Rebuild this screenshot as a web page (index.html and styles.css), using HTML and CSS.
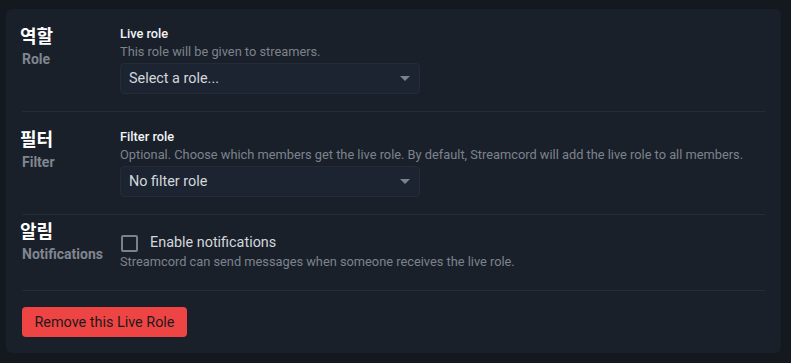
FILE: index.html
```html
<!DOCTYPE html>
<html>
<head>
  <meta charset="utf-8">
  <title>Live Role</title>
  <link rel="stylesheet" href="styles.css">
</head>
<body>
  <div class="card">
    <!-- 역할 -->
    <div class="row">
      <div class="row-label">
        <div class="label-ko">역할</div>
        <div class="label-en">Role</div>
      </div>
      <div class="row-body">
        <div class="field-title">Live role</div>
        <div class="field-desc">This role will be given to streamers.</div>
        <div class="select">
          <span>Select a role...</span>
          <span class="caret"></span>
        </div>
      </div>
    </div>

    <!-- 필터 -->
    <div class="row">
      <div class="row-label">
        <div class="label-ko">필터</div>
        <div class="label-en">Filter</div>
      </div>
      <div class="row-body">
        <div class="field-title">Filter role</div>
        <div class="field-desc">Optional. Choose which members get the live role. By default, Streamcord will add the live role to all members.</div>
        <div class="select">
          <span>No filter role</span>
          <span class="caret"></span>
        </div>
      </div>
    </div>

    <!-- 알림 -->
    <div class="row row-check">
      <div class="row-label">
        <div class="label-ko">알림</div>
        <div class="label-en">Notifications</div>
      </div>
      <div class="row-body">
        <label class="check">
          <span class="box"></span>
          <span>Enable notifications</span>
        </label>
        <div class="field-desc">Streamcord can send messages when someone receives the live role.</div>
      </div>
    </div>

    <div class="actions">
      <button class="btn-danger">Remove this Live Role</button>
    </div>
  </div>
</body>
</html>
```

FILE: styles.css
```css
body {
  margin: 9px 10px 10px 6px;
  background-color: #141920;
  font-family: Roboto, "Noto Sans CJK KR", sans-serif;
  color: #e8eaed;
}

.card {
  background-color: #19202a;
  border-radius: 6px;
  padding: 0 16px 16px 16px;
}

.row {
  display: flex;
  padding: 16px 0 17px 0;
  border-bottom: 1px solid #232c38;
}

.row-label {
  width: 98px;
  flex-shrink: 0;
}

.label-ko {
  font-family: "Noto Sans CJK KR", sans-serif;
  font-size: 18px;
  font-weight: 700;
  line-height: 20px;
  margin: 0 0 5px -2px;
  color: #ffffff;
}

.label-en {
  font-size: 14px;
  font-weight: 700;
  line-height: 18px;
  color: #80868f;
}

.row-body {
  flex: 1;
}

.field-title {
  font-size: 12.8px;
  font-weight: 500;
  line-height: 18px;
  color: #f2f3f5;
}

.field-desc {
  font-size: 12.8px;
  line-height: 18px;
  color: #7d838c;
}

.select {
  display: flex;
  align-items: center;
  justify-content: space-between;
  width: 300px;
  height: 31px;
  box-sizing: border-box;
  margin-top: 2px;
  padding: 0 9px 0 8px;
  background-color: #1c2431;
  border: 1px solid #232c39;
  border-radius: 4px;
  font-size: 14.4px;
  color: #d4d7dc;
}

.caret {
  width: 0;
  height: 0;
  border-left: 5.5px solid transparent;
  border-right: 5.5px solid transparent;
  border-top: 5px solid #7b828c;
}

/* 알림 row: label sits higher than the content */
.row-check {
  padding: 5px 0 19px 0;
}

.row-check .row-body {
  padding-top: 13px;
}

.check {
  display: flex;
  align-items: center;
  gap: 12px;
  font-size: 14.4px;
  color: #d4d7dc;
  line-height: 20px;
}

.box {
  width: 17px;
  height: 17px;
  box-sizing: border-box;
  margin-left: 1px;
  border: 2px solid #7b818b;
  border-radius: 2px;
}

.actions {
  padding-top: 16px;
}

.btn-danger {
  height: 30px;
  padding: 0 12.5px;
  border: none;
  border-radius: 4px;
  background-color: #ef4444;
  color: #1b1b1b;
  font-family: Roboto, sans-serif;
  font-size: 14.4px;
}
```
